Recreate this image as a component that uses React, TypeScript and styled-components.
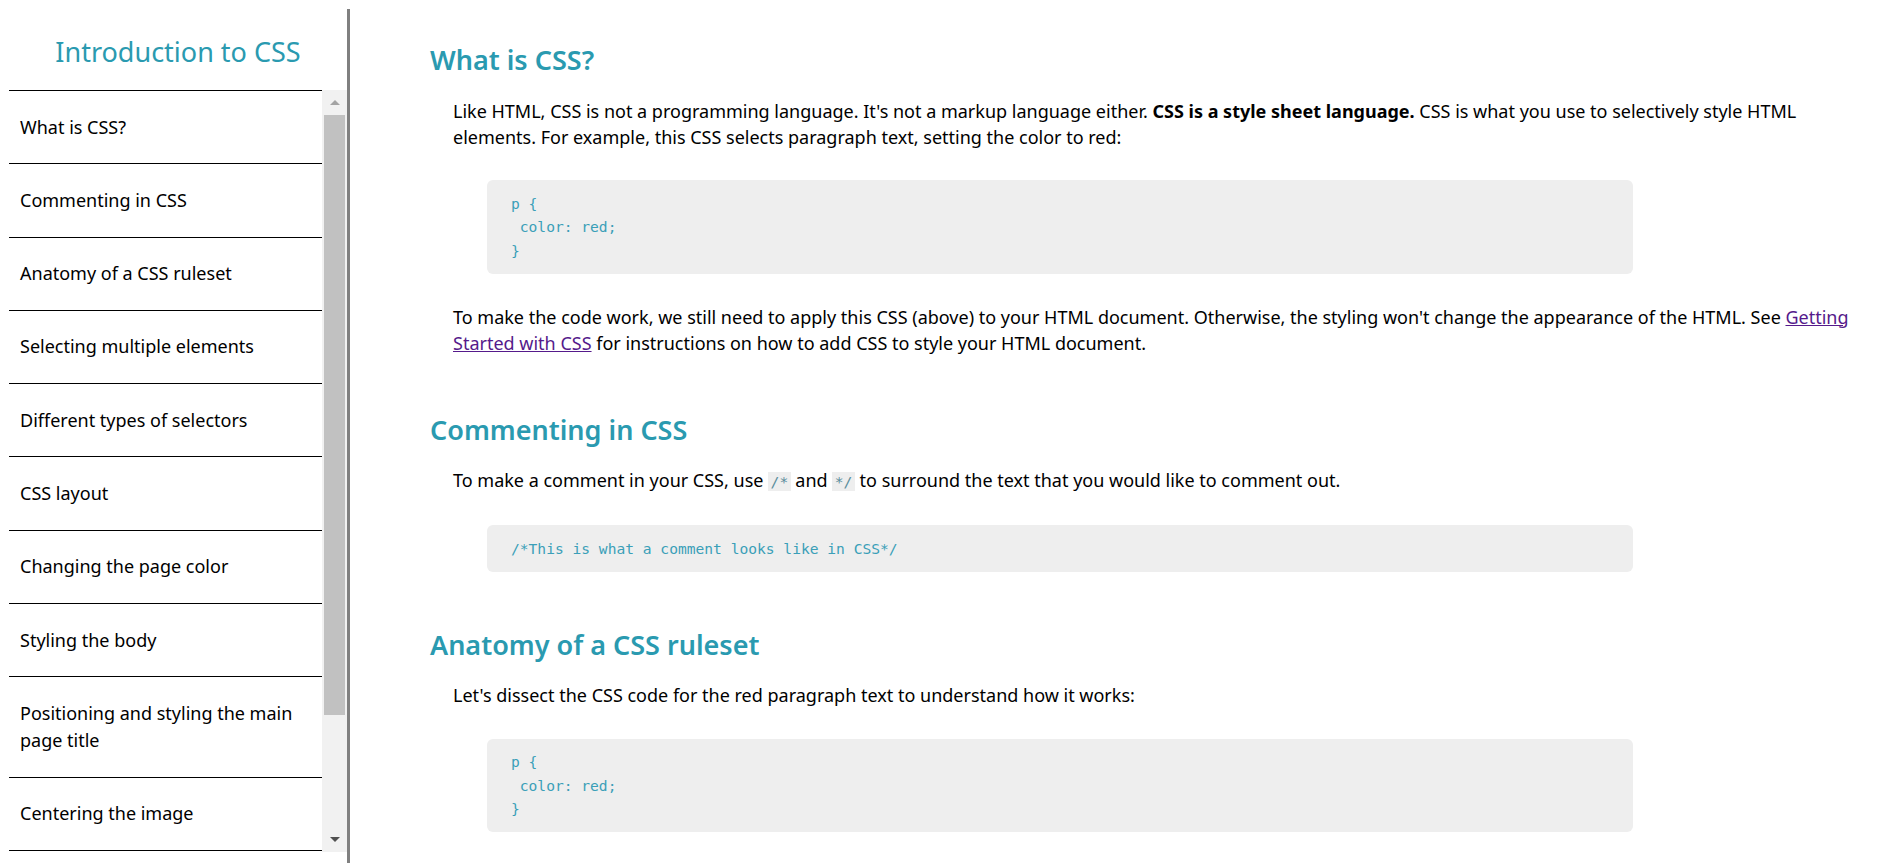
import React from "react";
import styled, { createGlobalStyle } from "styled-components";

const GlobalStyle = createGlobalStyle`
  html, body {
    margin: 0;
    padding: 0;
    overflow: hidden;
    background: #ffffff;
  }
  body {
    font-family: "Noto Sans", "Open Sans", sans-serif;
    color: #000000;
  }
  * { box-sizing: border-box; }
`;

const TEAL = "#2a9ab0";

const Page = styled.div`
  display: flex;
  height: 100vh;
`;

const Sidebar = styled.nav`
  flex: 0 0 auto;
  box-sizing: content-box;
  width: 338px;
  margin-top: 9px;
  padding-left: 9px;
  border-right: 3px solid #808080;
  display: flex;
  flex-direction: column;
`;

const SidebarTitle = styled.h1`
  margin: 0;
  height: 81px;
  padding-top: 3px;
  display: flex;
  align-items: center;
  justify-content: center;
  font-size: 27px;
  font-weight: 400;
  color: ${TEAL};
`;

const NavArea = styled.div`
  flex: 0 0 762px;
  display: flex;
`;

const NavViewport = styled.div`
  flex: 1 1 auto;
  min-width: 0;
  overflow: hidden;
`;

const NavList = styled.ul`
  list-style: none;
  margin: 0;
  padding: 0;
  border-top: 1px solid #000000;
`;

const NavItem = styled.li`
  padding: 22.65px 11px;
  border-bottom: 1px solid #000000;
  font-size: 18px;
  line-height: 27px;
  color: #000000;
`;

const ScrollTrack = styled.div`
  flex: 0 0 25px;
  background: #f1f1f1;
  display: flex;
  flex-direction: column;
`;

const ScrollButton = styled.div<{ $dir: "up" | "down" }>`
  flex: 0 0 25px;
  display: flex;
  align-items: center;
  justify-content: center;

  &::before {
    content: "";
    width: 0;
    height: 0;
    border-left: 5px solid transparent;
    border-right: 5px solid transparent;
    ${(p) =>
      p.$dir === "up"
        ? "border-bottom: 5px solid #a3a3a3;"
        : "border-top: 5px solid #505050;"}
  }
`;

const ScrollThumb = styled.div`
  flex: 0 0 600px;
  margin: 0 2px;
  background: #c1c1c1;
`;

const ScrollRest = styled.div`
  flex: 1 1 auto;
`;

const Main = styled.main`
  flex: 1 1 auto;
  min-width: 0;
  padding: 42px 30px 0 80px;
  display: flex;
  flex-direction: column;
  gap: 55px;
`;

const Section = styled.section`
  display: flex;
  flex-direction: column;
  align-items: flex-start;

  & > :last-child {
    margin-bottom: 0;
  }
`;

const Heading = styled.h2`
  margin: 0 0 19.5px;
  font-size: 27px;
  line-height: 36px;
  font-weight: 600;
  color: ${TEAL};
`;

const Para = styled.p`
  margin: 0 0 29.5px 23px;
  font-size: 18px;
  line-height: 26.6px;
  color: #000000;
`;

const Strong = styled.strong`
  font-weight: 700;
`;

const Link = styled.a`
  color: #551a8b;
  text-decoration: underline;
`;

const InlineCode = styled.code`
  font-family: "DejaVu Sans Mono", "Liberation Mono", monospace;
  font-size: 14.6px;
  color: #5a8d9c;
  background: #eeeeee;
  padding: 1px 2.5px;
`;

const CodeBlock = styled.pre`
  margin: 0 0 30px 57px;
  width: 1146px;
  padding: 11.5px 24px;
  background: #eeeeee;
  border-radius: 6px;
  font-family: "DejaVu Sans Mono", "Liberation Mono", monospace;
  font-size: 14.6px;
  line-height: 23.5px;
  color: #3a9fb8;
  white-space: pre;
`;

const navItems = [
  "What is CSS?",
  "Commenting in CSS",
  "Anatomy of a CSS ruleset",
  "Selecting multiple elements",
  "Different types of selectors",
  "CSS layout",
  "Changing the page color",
  "Styling the body",
  "Positioning and styling the main page title",
  "Centering the image",
];

const ruleCode = "p {\n color: red;\n}";

export default function App() {
  return (
    <>
      <GlobalStyle />
      <Page>
        <Sidebar>
          <SidebarTitle>Introduction to CSS</SidebarTitle>
          <NavArea>
            <NavViewport>
              <NavList>
                {navItems.map((item) => (
                  <NavItem key={item}>{item}</NavItem>
                ))}
              </NavList>
            </NavViewport>
            <ScrollTrack aria-hidden="true">
              <ScrollButton $dir="up" />
              <ScrollThumb />
              <ScrollRest />
              <ScrollButton $dir="down" />
            </ScrollTrack>
          </NavArea>
        </Sidebar>
        <Main>
          <Section>
            <Heading>What is CSS?</Heading>
            <Para>
              Like HTML, CSS is not a programming language. It's not a markup language either.{" "}
              <Strong>CSS is a style sheet language.</Strong> CSS is what you use to selectively style HTML
              elements. For example, this CSS selects paragraph text, setting the color to red:
            </Para>
            <CodeBlock>{ruleCode}</CodeBlock>
            <Para>
              To make the code work, we still need to apply this CSS (above) to your HTML document. Otherwise,
              the styling won't change the appearance of the HTML. See{" "}
              <Link href="#getting-started">Getting Started with CSS</Link> for instructions on how to add CSS to
              style your HTML document.
            </Para>
          </Section>
          <Section>
            <Heading>Commenting in CSS</Heading>
            <Para>
              To make a comment in your CSS, use <InlineCode>/*</InlineCode> and <InlineCode>*/</InlineCode> to
              surround the text that you would like to comment out.
            </Para>
            <CodeBlock>{"/*This is what a comment looks like in CSS*/"}</CodeBlock>
          </Section>
          <Section>
            <Heading>Anatomy of a CSS ruleset</Heading>
            <Para>Let's dissect the CSS code for the red paragraph text to understand how it works:</Para>
            <CodeBlock>{ruleCode}</CodeBlock>
          </Section>
        </Main>
      </Page>
    </>
  );
}
